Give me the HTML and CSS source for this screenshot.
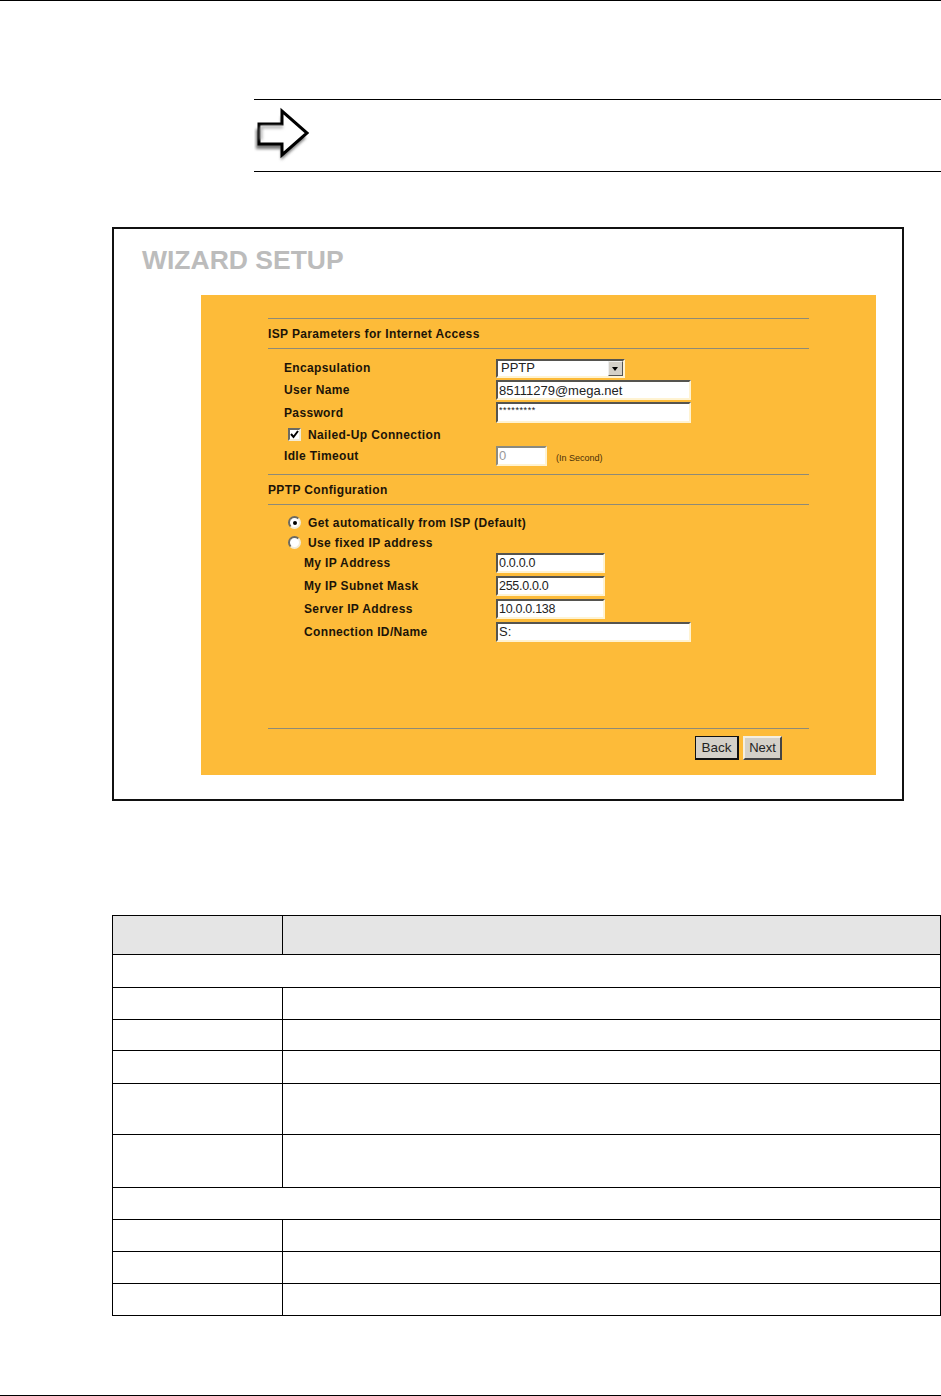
FILE: index.html
```html
<!DOCTYPE html>
<html lang="en">
<head>
  <meta charset="UTF-8">
  <meta name="viewport" content="width=device-width, initial-scale=1.0">
  <title>Wizard Setup</title>
  <link rel="stylesheet" href="styles.css">
</head>
<body>
  <div class="page">
    <div class="note">
      <svg class="note-arrow" width="60" height="58" viewBox="0 0 60 58">
        <defs>
          <filter id="soft" x="-20%" y="-20%" width="140%" height="140%">
            <feGaussianBlur stdDeviation="1.6"></feGaussianBlur>
          </filter>
          <filter id="edge" x="-10%" y="-10%" width="120%" height="120%">
            <feGaussianBlur stdDeviation="0.4"></feGaussianBlur>
          </filter>
        </defs>
        <path d="M3 18 H28 V5 L53 27 L28 49 V38 H3 Z" fill="#777" transform="translate(-1 5)" filter="url(#soft)"></path>
        <path d="M5 18 H28 V5 L53 27 L28 49 V38 H5 Z" fill="#fff" stroke="#000" stroke-width="3" filter="url(#edge)"></path>
        <path d="M7 21 H29 M7 21 V34" fill="none" stroke="#aaa" stroke-width="2.5" filter="url(#soft)"></path>
      </svg>
    </div>

    <div class="frame">
      <h1 class="frame-title">WIZARD SETUP</h1>
      <form class="panel">
        <div class="section-head">ISP Parameters for Internet Access</div>
        <div class="rows">
          <div class="row">
            <label class="row-label">Encapsulation</label>
            <div class="select"><span class="select-text">PPTP</span><span class="select-btn"></span></div>
          </div>
          <div class="row">
            <label class="row-label">User Name</label>
            <input class="field field-long" type="text" value="85111279@mega.net">
          </div>
          <div class="row row-23">
            <label class="row-label">Password</label>
            <input class="field field-long field-pw" type="text" value="*********">
          </div>
          <div class="row row-21">
            <div class="choice">
              <span class="check">
                <svg width="9" height="9" viewBox="0 0 9 9"><path d="M1 4 L3.5 7 L8 1" fill="none" stroke="#000" stroke-width="2"></path></svg>
              </span>
              Nailed-Up Connection
            </div>
          </div>
          <div class="row row-21">
            <label class="row-label">Idle Timeout</label>
            <div class="idle">
              <input class="field field-idle" type="text" value="0" disabled>
              <span class="idle-unit">(In Second)</span>
            </div>
          </div>
        </div>

        <div class="section-head section-second">PPTP Configuration</div>
        <div class="rows rows-second">
          <div class="row row-21">
            <div class="choice"><span class="radio radio-on"></span>Get automatically from ISP (Default)</div>
          </div>
          <div class="row row-19">
            <div class="choice"><span class="radio"></span>Use fixed IP address</div>
          </div>
          <div class="row row-23 row-sub">
            <label class="row-label">My IP Address</label>
            <input class="field field-mid" type="text" value="0.0.0.0">
          </div>
          <div class="row row-23 row-sub">
            <label class="row-label">My IP Subnet Mask</label>
            <input class="field field-mid" type="text" value="255.0.0.0">
          </div>
          <div class="row row-23 row-sub">
            <label class="row-label">Server IP Address</label>
            <input class="field field-mid" type="text" value="10.0.0.138">
          </div>
          <div class="row row-23 row-sub">
            <label class="row-label">Connection ID/Name</label>
            <input class="field field-long" type="text" value="S:">
          </div>
        </div>

        <div class="actions">
          <button class="btn btn-default" type="button">Back</button>
          <button class="btn" type="button">Next</button>
        </div>
      </form>
    </div>

    <table class="desc">
      <tr class="h-39"><th class="col-label"></th><th></th></tr>
      <tr class="h-33"><td colspan="2"></td></tr>
      <tr class="h-32"><td></td><td></td></tr>
      <tr class="h-31"><td></td><td></td></tr>
      <tr class="h-33"><td></td><td></td></tr>
      <tr class="h-51"><td></td><td></td></tr>
      <tr class="h-53"><td></td><td></td></tr>
      <tr class="h-32"><td colspan="2"></td></tr>
      <tr class="h-32"><td></td><td></td></tr>
      <tr class="h-32"><td></td><td></td></tr>
      <tr class="h-32"><td></td><td></td></tr>
    </table>

    <div class="page-foot"></div>
  </div>
</body>
</html>
```

FILE: styles.css
```css
html, body {
  margin: 0;
  background-color: #fff;
}
.page {
  width: 941px;
  height: 1396px;
  box-sizing: border-box;
  border-top: 1px solid #000;
  overflow: hidden;
  font-family: "Liberation Sans", Arial, sans-serif;
}

/* note */
.note {
  margin: 98px 0 0 254px;
  height: 71px;
  border-top: 1px solid #000;
  border-bottom: 1px solid #000;
}
.note-arrow {
  display: block;
  margin-top: 6px;
}

/* wizard frame */
.frame {
  box-sizing: border-box;
  width: 792px;
  height: 574px;
  margin: 55px 0 0 112px;
  border: 2px solid #111;
  padding-top: 15px;
}
.frame-title {
  margin: 0 0 19px 28px;
  height: 32px;
  line-height: 32px;
  font-size: 26.5px;
  font-weight: bold;
  color: #bcbcbc;
}
.panel {
  box-sizing: border-box;
  width: 675px;
  height: 480px;
  margin-left: 87px;
  padding: 23px 67px 0;
  background-color: #fdbb39;
  color: #1c1408;
}
.section-head {
  box-sizing: border-box;
  height: 31px;
  line-height: 31px;
  border-top: 1px solid #8d8a78;
  border-bottom: 1px solid #8d8a78;
  font-size: 12px;
  font-weight: bold;
  letter-spacing: 0.36px;
}
.section-second {
  margin-top: 8px;
}
.rows {
  padding-top: 8px;
}
.rows-second {
  padding-top: 7px;
}
.row {
  box-sizing: border-box;
  display: flex;
  align-items: center;
  height: 22px;
  padding-left: 16px;
}
.row-19 { height: 19px; }
.row-21 { height: 21px; }
.row-23 { height: 23px; }
.row-label {
  width: 212px;
  flex: none;
  font-size: 12px;
  font-weight: bold;
  letter-spacing: 0.35px;
}
.row-sub {
  padding-left: 36px;
  padding-bottom: 2px;
}
.row-sub .row-label {
  width: 192px;
}

/* form controls, old windows look */
.field {
  box-sizing: border-box;
  height: 20px;
  margin: 0;
  padding: 1px 1px;
  border: 2px solid;
  border-color: #55544f #fff3d2 #fff3d2 #55544f;
  background-color: #fff;
  font-family: "Liberation Sans", Arial, sans-serif;
  font-size: 13px;
  color: #222;
  outline: none;
}
.field-long { width: 195px; }
.field-mid {
  width: 109px;
  font-size: 12.5px;
  letter-spacing: -0.3px;
}
.field-idle {
  width: 51px;
  color: #999;
  border-color: #8a8a80 #fff3d2 #fff3d2 #8a8a80;
}
.field-pw {
  height: 21px;
  padding-bottom: 6px;
  font-size: 9px;
  letter-spacing: 0.6px;
}
.select {
  box-sizing: border-box;
  display: flex;
  width: 129px;
  height: 19px;
  border: 2px solid;
  border-color: #55544f #fff3d2 #fff3d2 #55544f;
  background-color: #fff;
  font-size: 13px;
}
.select-text {
  flex: 1;
  padding-left: 3px;
  line-height: 14px;
  color: #222;
}
.select-btn {
  position: relative;
  width: 15px;
  background-color: #d4d0c8;
  border: 1px solid;
  border-color: #eee #555 #555 #eee;
  box-sizing: border-box;
}
.select-btn::after {
  content: "";
  position: absolute;
  left: 3px;
  top: 5px;
  border-style: solid;
  border-width: 4px 3.5px 0;
  border-color: #000 transparent transparent;
}
.choice {
  display: flex;
  align-items: center;
  font-size: 12px;
  font-weight: bold;
  letter-spacing: 0.38px;
}
.check {
  box-sizing: border-box;
  display: flex;
  align-items: center;
  justify-content: center;
  width: 13px;
  height: 13px;
  margin: 0 7px 0 4px;
  border: 2px solid;
  border-color: #6b6a63 #f3ecd8 #f3ecd8 #6b6a63;
  background-color: #fff;
}
.radio {
  box-sizing: border-box;
  position: relative;
  width: 13px;
  height: 13px;
  margin: 0 7px 0 4px;
  border: 2px solid;
  border-color: #6b6a63 #f3ecd8 #f3ecd8 #6b6a63;
  border-radius: 50%;
  background-color: #fff;
}
.radio-on::after {
  content: "";
  position: absolute;
  left: 2.5px;
  top: 2.5px;
  width: 4px;
  height: 4px;
  border-radius: 50%;
  background-color: #000;
}
.idle {
  display: flex;
  align-items: center;
}
.idle-unit {
  margin: 5px 0 0 9px;
  font-size: 9px;
  color: #4a3008;
}
.actions {
  display: flex;
  justify-content: flex-end;
  gap: 4px;
  margin-top: 84px;
  padding: 7px 27px 0 0;
  border-top: 1px solid #8d8a78;
}
.btn {
  box-sizing: border-box;
  width: 39px;
  height: 24px;
  padding: 0 0 1px;
  border: 2px solid;
  border-color: #f5efe0 #444 #444 #f5efe0;
  background-color: #d4d0c8;
  font-family: "Liberation Sans", Arial, sans-serif;
  font-size: 13px;
  color: #222;
}
.btn-default {
  width: 44px;
  padding: 0;
  font-size: 13.5px;
  border-color: #111;
  border-width: 1px 2px 2px 1px;
}

/* description table */
.desc {
  width: 829px;
  margin: 114px 0 0 112px;
  border-collapse: collapse;
  table-layout: fixed;
}
.desc th,
.desc td {
  padding: 0;
  border: 1px solid #000;
}
.desc th {
  background-color: #e5e5e5;
}
.col-label {
  width: 169px;
}
.h-31 { height: 31px; }
.h-32 { height: 32px; }
.h-33 { height: 33px; }
.h-39 { height: 39px; }
.h-51 { height: 51px; }
.h-53 { height: 53px; }

.page-foot {
  margin-top: 79px;
  border-top: 1px solid #000;
}
```
